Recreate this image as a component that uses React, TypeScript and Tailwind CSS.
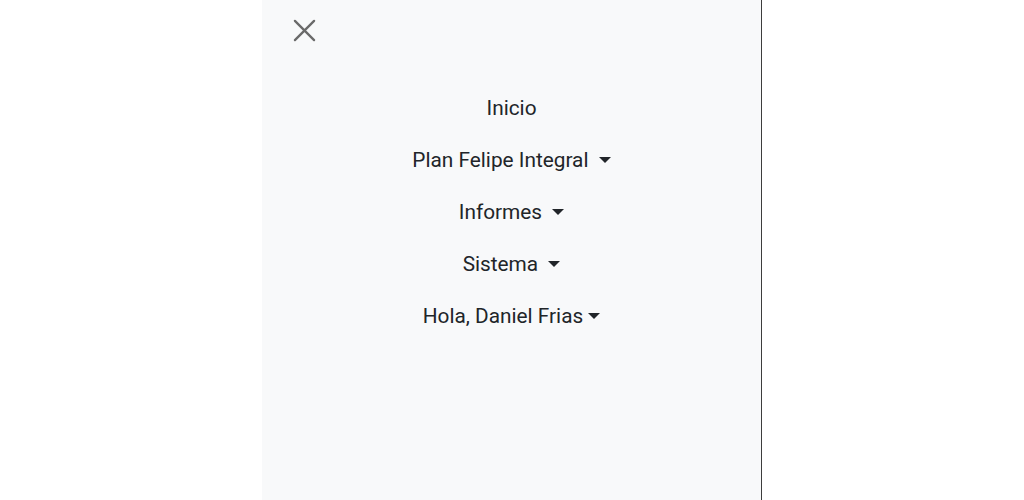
import React from 'react'

const items = [
  { label: 'Inicio', caret: false, space: false },
  { label: 'Plan Felipe Integral', caret: true, space: true },
  { label: 'Informes', caret: true, space: true },
  { label: 'Sistema', caret: true, space: true },
  { label: 'Hola, Daniel Frias', caret: true, space: false },
]

function Caret() {
  return (
    <span className="inline-block align-middle ml-[5px] w-0 h-0 border-l-[6px] border-r-[6px] border-t-[6px] border-l-transparent border-r-transparent border-t-[#212529] -translate-y-[2px]" />
  )
}

export default function App() {
  return (
    <div className="w-full h-[500px] bg-white flex justify-center" style={{ fontFamily: 'Roboto, "Noto Sans", sans-serif' }}>
      <nav className="w-[500px] h-full bg-[#f8f9fa] border-r border-[#3d3d3d]">
        <div className="h-[82px] pl-[31px] pt-[19px]">
          <button className="block w-[23px] h-[23px] text-[#6a6a6a]">
            <svg viewBox="0 0 24 24" width="23" height="23" fill="none" stroke="currentColor" strokeWidth="2.4" strokeLinecap="round">
              <path d="M2 2 L22 22 M22 2 L2 22" />
            </svg>
          </button>
        </div>
        <ul className="flex flex-col items-center text-[20.8px] text-[#212529]">
          {items.map((it) => (
            <li key={it.label} className="py-[11px] leading-[30px]">
              <a href="#" className="whitespace-pre">
                {it.label}
                {it.space ? ' ' : ''}
                {it.caret && <Caret />}
              </a>
            </li>
          ))}
        </ul>
      </nav>
    </div>
  )
}
